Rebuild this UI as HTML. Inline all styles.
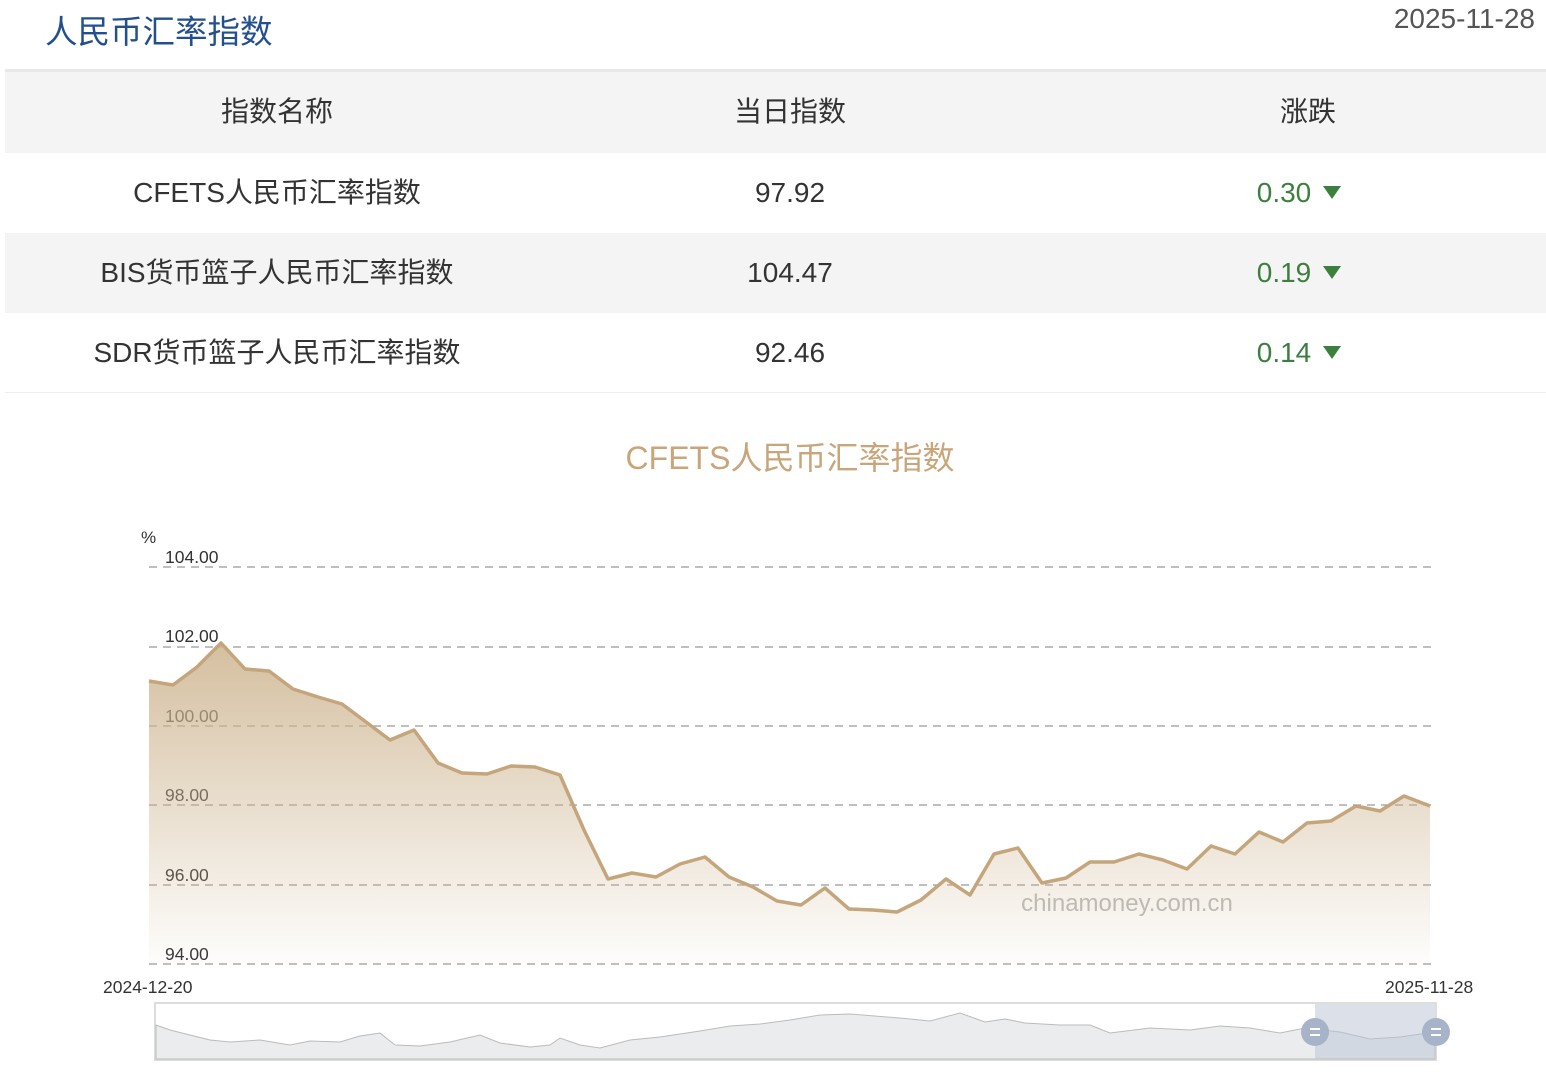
<!DOCTYPE html>
<html><head><meta charset="utf-8">
<style>
*{margin:0;padding:0;box-sizing:border-box}
body{width:1546px;height:1092px;background:#fff;font-family:"Liberation Sans","Noto Sans CJK SC",sans-serif;position:relative;overflow:hidden;color:#333}
.title{position:absolute;left:45px;top:6px;font-size:32.5px;color:#234f8e}
.date{position:absolute;right:11px;top:3px;font-size:28px;color:#555}
.sep{position:absolute;left:5px;right:0;top:69px;height:3px;background:#e8e8e8}
.row{position:absolute;left:5px;right:0;height:80px;font-size:28px;color:#333}
.row div{position:absolute;top:0;line-height:80px;text-align:center}
.c1{left:0;width:544px}.c2{left:585px;width:400px}.c3{left:1094px;width:400px}
.g{color:#3c7f3f}
.tri{display:inline-block;width:0;height:0;border-left:9px solid transparent;border-right:9px solid transparent;border-top:13px solid #3c7f3f;margin-left:12px;vertical-align:3px}
</style></head><body>
<div class="title">人民币汇率指数</div>
<div class="date">2025-11-28</div>
<div class="sep"></div>
<div class="row" style="top:72px;height:81px;background:#f4f4f4"><div class="c1">指数名称</div><div class="c2">当日指数</div><div class="c3" style="left:1103px">涨跌</div></div>
<div class="row" style="top:153px"><div class="c1">CFETS人民币汇率指数</div><div class="c2">97.92</div><div class="c3 g">0.30<span class="tri"></span></div></div>
<div class="row" style="top:233px;background:#f4f4f4"><div class="c1">BIS货币篮子人民币汇率指数</div><div class="c2">104.47</div><div class="c3 g">0.19<span class="tri"></span></div></div>
<div class="row" style="top:313px;border-bottom:1px solid #eee"><div class="c1">SDR货币篮子人民币汇率指数</div><div class="c2">92.46</div><div class="c3 g">0.14<span class="tri"></span></div></div>
<svg width="1546" height="1092" style="position:absolute;left:0;top:0" font-family="Liberation Sans, sans-serif">
<defs>
<linearGradient id="a" x1="0" y1="0" x2="0" y2="1"><stop offset="0" stop-color="#cdb48f" stop-opacity=".85"/><stop offset="1" stop-color="#cdb48f" stop-opacity=".03"/></linearGradient>
</defs>
<text x="790" y="469" text-anchor="middle" font-size="32" fill="#c8a67a" font-family="Liberation Sans, Noto Sans CJK SC, sans-serif">CFETS人民币汇率指数</text>
<text x="141" y="543" font-size="17" fill="#333">%</text>
<g font-size="17.5" fill="#333">
<text x="165" y="563">104.00</text><text x="165" y="642">102.00</text><text x="165" y="722">100.00</text><text x="165" y="801">98.00</text><text x="165" y="881">96.00</text><text x="165" y="960">94.00</text>
</g>
<g stroke="#999" stroke-width="1.3" stroke-dasharray="8,6">
<line x1="149" x2="1432" y1="567" y2="567"/><line x1="149" x2="1432" y1="647" y2="647"/><line x1="149" x2="1432" y1="726" y2="726"/><line x1="149" x2="1432" y1="805" y2="805"/><line x1="149" x2="1432" y1="885" y2="885"/><line x1="149" x2="1432" y1="964" y2="964"/>
</g>
<text x="1127" y="911" text-anchor="middle" font-size="24" fill="#bbb">chinamoney.com.cn</text>
<path fill="url(#a)" d="M149,681 L173,685 197,667 221,643 245,669 269,671 293,689 318,697 342,704 366,722 390,740 414,730 438,763 462,773 487,774 511,766 535,767 560,775 584,830 608,879 632,873 656,877 680,864 705,857 729,877 753,887 777,901 801,905 825,888 849,909 873,910 897,912 921,900 946,879 970,895 994,854 1018,848 1042,883 1066,878 1090,862 1114,862 1139,854 1163,860 1187,869 1211,846 1235,854 1259,832 1283,842 1307,823 1331,821 1356,806 1380,811 1404,796 1430,806 L1430,964 L149,964Z"/>
<path fill="none" stroke="#c4a57c" stroke-width="3.5" stroke-linejoin="round" d="M149,681 L173,685 197,667 221,643 245,669 269,671 293,689 318,697 342,704 366,722 390,740 414,730 438,763 462,773 487,774 511,766 535,767 560,775 584,830 608,879 632,873 656,877 680,864 705,857 729,877 753,887 777,901 801,905 825,888 849,909 873,910 897,912 921,900 946,879 970,895 994,854 1018,848 1042,883 1066,878 1090,862 1114,862 1139,854 1163,860 1187,869 1211,846 1235,854 1259,832 1283,842 1307,823 1331,821 1356,806 1380,811 1404,796 1430,806"/>
<text x="103" y="993" font-size="17.5" fill="#333">2024-12-20</text>
<text x="1385" y="993" font-size="17.5" fill="#333">2025-11-28</text>
<rect x="155" y="1003" width="1281" height="57" fill="#fff" stroke="#ddd" stroke-width="2"/>
<path fill="#ebecee" stroke="#bbb" stroke-width="1" d="M156,1025 L170,1030 190,1035 210,1040 230,1042 260,1040 290,1045 310,1041 340,1042 360,1036 380,1033 395,1045 420,1046 450,1042 480,1035 500,1043 530,1047 550,1045 560,1038 580,1045 600,1048 630,1040 660,1037 700,1031 730,1026 760,1024 790,1020 820,1015 850,1014 900,1018 930,1021 960,1013 985,1022 1005,1019 1025,1023 1060,1025 1090,1025 1110,1033 1150,1028 1190,1030 1220,1026 1250,1028 1280,1033 1305,1028 1340,1032 1370,1039 1400,1037 1435,1032 L1435,1059 L156,1059Z"/>
<rect x="1315" y="1004" width="120" height="55" fill="#b9c3d4" opacity=".5"/>
<ellipse cx="1315" cy="1032" rx="14" ry="14" fill="#a7b3c9"/>
<ellipse cx="1436" cy="1032" rx="14" ry="14" fill="#a7b3c9"/>
<g stroke="#fff" stroke-width="2"><line x1="1310" x2="1320" y1="1029" y2="1029"/><line x1="1310" x2="1320" y1="1035" y2="1035"/><line x1="1431" x2="1441" y1="1029" y2="1029"/><line x1="1431" x2="1441" y1="1035" y2="1035"/></g>
</svg>
</body></html>
